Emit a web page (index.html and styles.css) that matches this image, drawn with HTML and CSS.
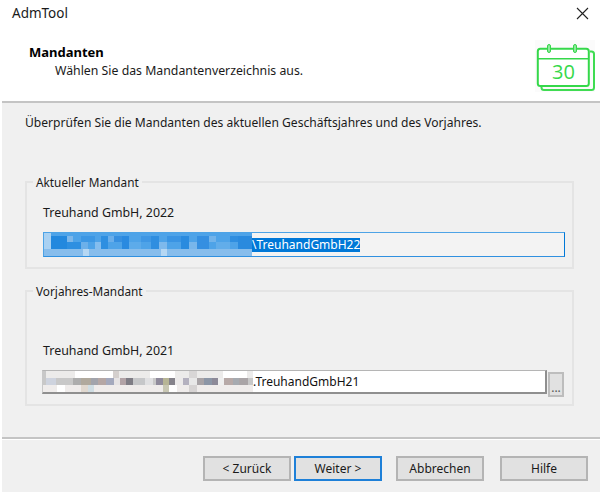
FILE: index.html
```html
<!DOCTYPE html>
<html lang="de">
<head>
<meta charset="utf-8">
<title>AdmTool</title>
<link rel="stylesheet" href="styles.css">
</head>
<body>
<div class="window">
  <div class="top">
    <div class="titlebar">
      <span class="app-title">AdmTool</span>
      <svg class="close" width="13" height="13" viewBox="0 0 13 13"><path d="M1 1L12 12M12 1L1 12" stroke="#222" stroke-width="1.1" fill="none"/></svg>
    </div>
    <div class="header">
      <div class="heading">
        <div class="heading-title">Mandanten</div>
        <div class="heading-sub">Wählen Sie das Mandantenverzeichnis aus.</div>
      </div>
      <svg class="calendar" width="60" height="52" viewBox="0 0 60 52">
        <rect x="0" y="0" width="60" height="52" fill="#fbfbfb"/>
        <path d="M55 11.5h1.5a2.5 2.5 0 0 1 2.500 2.500V47.500a2.500 2.500 0 0 1-2.500 2.500H9a2.500 2.500 0 0 1-2.500-2.500V46" fill="none" stroke="#3fdc52" stroke-width="2"/>
        <rect x="2.800" y="8.800" width="51" height="37.200" rx="2.500" fill="#fff" stroke="#35d84a" stroke-width="2"/>
        <path d="M3 18.800H54" stroke="#35d84a" stroke-width="1.600"/>
        <rect x="12.500" y="4.500" width="3" height="8" rx="1.500" fill="#8ce89a" stroke="#35d84a"/>
        <rect x="38.500" y="4.500" width="3" height="8" rx="1.500" fill="#8ce89a" stroke="#35d84a"/>
        <text x="28.500" y="38.500" text-anchor="middle" class="cal-text">30</text>
      </svg>
    </div>
  </div>
  <div class="main">
    <p class="intro">Überprüfen Sie die Mandanten des aktuellen Geschäftsjahres und des Vorjahres.</p>
    <fieldset class="group group-current">
      <legend>Aktueller Mandant</legend>
      <div class="client">Treuhand GmbH, 2022</div>
      <div class="field field-active">
        <svg class="mosaic" width="208" height="23" viewBox="0 0 208 23" shape-rendering="crispEdges">
          <rect width="208" height="16" fill="#4ea3e8"/>
          <rect x="0" width="7" height="16" fill="#a9d1f2"/>
          <rect x="7" y="3" width="16" height="13" fill="#2388de"/>
          <rect x="23" y="3" width="6" height="6" fill="#7db7ea"/>
          <rect x="23" y="9" width="14" height="7" fill="#2e8fe1"/>
          <rect x="37" y="3" width="14" height="6" fill="#3c97e4"/>
          <rect x="37" y="9" width="7" height="7" fill="#6cb0ea"/>
          <rect x="51" y="9" width="6" height="7" fill="#84bdee"/>
          <rect x="57" y="3" width="7" height="13" fill="#2e8fe1"/>
          <rect x="64" y="3" width="6" height="6" fill="#6aaeea"/>
          <rect x="70" y="3" width="8" height="6" fill="#368fe0"/>
          <rect x="78" y="3" width="7" height="13" fill="#2a8ae0"/>
          <rect x="85" y="9" width="12" height="7" fill="#5dabea"/>
          <rect x="97" y="3" width="10" height="6" fill="#3f97e4"/>
          <rect x="107" y="3" width="8" height="13" fill="#2f8ee0"/>
          <rect x="115" y="9" width="8" height="7" fill="#7eb9ec"/>
          <rect x="123" y="3" width="14" height="6" fill="#3a94e3"/>
          <rect x="137" y="3" width="8" height="13" fill="#2a8bdf"/>
          <rect x="145" y="9" width="8" height="7" fill="#78b6eb"/>
          <rect x="153" y="3" width="12" height="13" fill="#358fe1"/>
          <rect x="165" y="3" width="7" height="6" fill="#72b3ea"/>
          <rect x="172" y="9" width="14" height="7" fill="#62adea"/>
          <rect x="186" y="3" width="8" height="6" fill="#2f8ee0"/>
          <rect x="194" y="3" width="14" height="13" fill="#2a8ade"/>
          <rect y="16" width="208" height="7" fill="#87bdec"/>
          <rect x="39" y="16" width="6" height="7" fill="#b5d7f3"/>
          <rect x="117" y="16" width="6" height="7" fill="#b5d7f3"/>
        </svg><span class="path-text path-selected">\TreuhandGmbH22</span>
      </div>
    </fieldset>
    <fieldset class="group group-previous">
      <legend>Vorjahres-Mandant</legend>
      <div class="client">Treuhand GmbH, 2021</div>
      <div class="field-row">
        <div class="field field-plain">
          <svg class="mosaic" width="210" height="21" viewBox="0 0 210 21" shape-rendering="crispEdges">
            <rect width="210" height="7" fill="#ecebea"/>
            <rect x="0" width="3" height="21" fill="#c8c8c8"/>
            <rect x="32" width="38" height="7" fill="#fff"/>
            <rect x="70" width="6" height="7" fill="#d4cfcd"/>
            <rect x="107" width="25" height="7" fill="#fff"/>
            <rect x="146" width="8" height="7" fill="#d8d6d6"/>
            <rect x="180" width="24" height="7" fill="#fff"/>
            <rect y="7" width="210" height="7" fill="#c8c8c8"/>
            <rect x="3" y="7" width="10" height="7" fill="#ced3de"/>
            <rect x="30" y="7" width="8" height="7" fill="#adadad"/>
            <rect x="38" y="7" width="10" height="7" fill="#b0a99d"/>
            <rect x="48" y="7" width="7" height="7" fill="#a2a4ac"/>
            <rect x="55" y="7" width="8" height="7" fill="#b5a7a5"/>
            <rect x="63" y="7" width="8" height="7" fill="#a4a9bd"/>
            <rect x="71" y="7" width="6" height="7" fill="#e6e3e4"/>
            <rect x="77" y="7" width="6" height="7" fill="#b2a3a6"/>
            <rect x="83" y="7" width="7" height="7" fill="#7f7d85"/>
            <rect x="90" y="7" width="12" height="7" fill="#c6c7c9"/>
            <rect x="102" y="7" width="8" height="7" fill="#e0e0e2"/>
            <rect x="113" y="7" width="7" height="7" fill="#8f8a9b"/>
            <rect x="120" y="7" width="6" height="7" fill="#b7b596"/>
            <rect x="126" y="7" width="6" height="7" fill="#85838b"/>
            <rect x="132" y="7" width="8" height="7" fill="#eceaea"/>
            <rect x="140" y="7" width="6" height="7" fill="#b4b1bf"/>
            <rect x="146" y="7" width="8" height="7" fill="#e8e8e8"/>
            <rect x="154" y="7" width="7" height="7" fill="#a8a3a6"/>
            <rect x="161" y="7" width="8" height="7" fill="#8c96a6"/>
            <rect x="169" y="7" width="6" height="7" fill="#8d8a98"/>
            <rect x="175" y="7" width="6" height="7" fill="#efefef"/>
            <rect x="181" y="7" width="9" height="7" fill="#b7a9a7"/>
            <rect x="190" y="7" width="6" height="7" fill="#a6aab0"/>
            <rect x="196" y="7" width="9" height="7" fill="#aaa5a7"/>
            <rect y="14" width="210" height="7" fill="#efeceb"/>
            <rect x="14" y="14" width="8" height="7" fill="#fff"/>
            <rect x="38" y="14" width="7" height="7" fill="#e0d8cf"/>
            <rect x="45" y="14" width="6" height="7" fill="#cfdde3"/>
            <rect x="120" y="14" width="6" height="7" fill="#c8c7b3"/>
            <rect x="126" y="14" width="8" height="7" fill="#fff"/>
            <rect x="146" y="14" width="8" height="7" fill="#d6d3d3"/>
          </svg><span class="path-text">.TreuhandGmbH21</span>
        </div>
        <button class="browse" type="button">...</button>
      </div>
    </fieldset>
  </div>
  <div class="footer">
    <button class="btn" type="button">&lt; Zurück</button>
    <button class="btn btn-default" type="button">Weiter &gt;</button>
    <button class="btn btn-cancel" type="button">Abbrechen</button>
    <button class="btn btn-help" type="button">Hilfe</button>
  </div>
</div>
</body>
</html>
```
FILE: styles.css
```css
* { box-sizing: border-box; }
html, body { margin: 0; padding: 0; height: 100%; background: #fff; }
body {
  font-family: "Noto Sans", "Open Sans", "Liberation Sans", sans-serif;
  font-size: 12px;
  line-height: 16px;
  color: #1a1a1a;
}
.window {
  width: 600px;
  height: 492px;
  padding-left: 2px;
  display: flex;
  flex-direction: column;
}
.top {
  height: 101px;
  background: #fff;
}
.titlebar {
  height: 26px;
  padding: 5px 14px 0 10px;
  display: flex;
  justify-content: space-between;
  align-items: flex-start;
}
.app-title { font-size: 13.500px; }
.close { margin-top: 2px; margin-right: -3px; }
.header {
  display: flex;
  justify-content: space-between;
  align-items: flex-start;
  padding-left: 27px;
  padding-right: 5px;
}
.heading { padding-top: 18px; }
.heading-title { font-size: 13px; font-weight: 700; color: #000; }
.heading-sub { font-size: 12.300px; margin-left: 26px; margin-top: 3px; }
.calendar { margin-top: 14px; margin-right: 0; }
.cal-text {
  font-family: "Open Sans", sans-serif;
  font-size: 20px;
  fill: #35d84a;
}
.main {
  flex: 1;
  background: #f0f0f0;
  border-top: 2px solid #c4c4c4;
  padding: 0 26px 0 23px;
}
.intro { font-size: 12.080px; margin: 12px 0 0; }
.group {
  margin: 0;
  padding: 0;
  border: 2px solid #e4e4e4;
  min-width: 0;
}
.group legend {
  font-size: 11.800px;
  margin-left: 6px;
  padding: 0 3px;
  line-height: 16px;
}
.group-current { margin-top: 43px; height: 95px; }
.group-previous { margin-top: 14px; height: 123px; }
.client { font-size: 12.400px; padding-left: 16px; }
.group-current .client { margin-top: 15px; }
.group-previous .client { margin-top: 44px; }
.field {
  display: flex;
  align-items: center;
  height: 25px;
  font-size: 12px;
}
.mosaic { flex: none; display: block; }
.path-text { white-space: nowrap; }
.field-active {
  margin: 11px 7px 0 16px;
  border: 1px solid #0078d7;
  border-color: #4da3e6 #0078d7 #2f90e0 #4da3e6;
  background: #f3f3f3;
  padding: 0;
}
.path-selected {
  background: #0078d7;
  color: #fff;
  line-height: 14px;
}
.field-row {
  display: flex;
  margin: 11px 0 0 15px;
}
.field-plain {
  width: 505px;
  height: 24px;
  border: 1px solid #8f8f8f;
  border-width: 1px 2px 2px 1px;
  border-color: #b5b5b5 #8f8f8f #8f8f8f #c8c8c8;
  background: #fff;
  color: #111;
}
.browse {
  width: 16px;
  height: 25px;
  margin: 2px 0 0 1px;
  padding: 6px 0 0;
  font: inherit;
  color: #555;
  background: #e1e1e1;
  border: 2px solid #bdbdbd;
}
.footer {
  height: 55px;
  flex: none;
  background: #f0f0f0;
  border-top: 2px solid #c4c4c4;
  box-shadow: inset 0 1px 0 #fff;
  display: flex;
  align-items: flex-start;
  padding: 17px 0 0 201px;
}
.btn {
  width: 88px;
  height: 25px;
  padding: 0;
  font: inherit;
  color: #1a1a1a;
  background: #e1e1e1;
  border: 2px solid #b4b4b4;
}
.btn-default { margin-left: 3px; border-color: #1e80d8; }
.btn-cancel { margin-left: 14px; }
.btn-help { margin-left: 16px; }
```
